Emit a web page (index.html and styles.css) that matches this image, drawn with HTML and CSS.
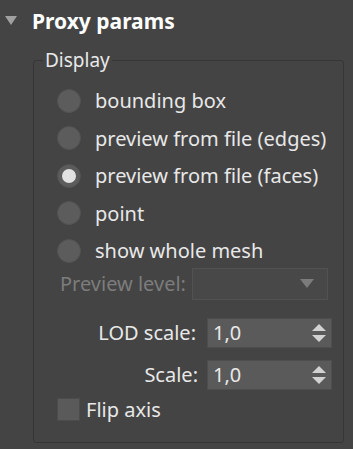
FILE: index.html
```html
<!DOCTYPE html>
<html lang="en">
<head>
  <meta charset="UTF-8">
  <meta name="viewport" content="width=device-width, initial-scale=1">
  <title>Proxy params</title>
  <link rel="stylesheet" href="styles.css">
</head>
<body>
  <div class="rollout-head">
    <span class="caret"></span>
    <span class="rollout-title">Proxy params</span>
  </div>
  <fieldset class="group">
    <legend>Display</legend>
    <div class="radio-row"><span class="radio"></span><span>bounding box</span></div>
    <div class="radio-row"><span class="radio"></span><span class="clip">preview from file (edges)</span></div>
    <div class="radio-row"><span class="radio checked"></span><span>preview from file (faces)</span></div>
    <div class="radio-row"><span class="radio"></span><span>point</span></div>
    <div class="radio-row"><span class="radio"></span><span>show whole mesh</span></div>

    <div class="field-row disabled">
      <span class="level-label">Preview level:</span>
      <div class="dropdown"><span class="drop-arrow"></span></div>
    </div>
    <div class="field-row spin-row">
      <span class="field-label">LOD scale:</span>
      <div class="spinner"><span>1,0</span><span class="spin-arrows"><i class="up"></i><i class="down"></i></span></div>
    </div>
    <div class="field-row spin-row second">
      <span class="field-label">Scale:</span>
      <div class="spinner"><span>1,0</span><span class="spin-arrows"><i class="up"></i><i class="down"></i></span></div>
    </div>
    <div class="check-row"><span class="checkbox"></span><span>Flip axis</span></div>
  </fieldset>
</body>
</html>
```

FILE: styles.css
```css
body {
  margin: 0;
  background-color: #444444;
  font-family: "Noto Sans", "Open Sans", sans-serif;
  font-size: 20px;
  color: #e8e8e8;
  overflow: hidden;
}
.rollout-head {
  display: flex;
  align-items: center;
  height: 40px;
  padding-left: 5px;
}
.caret {
  width: 0;
  height: 0;
  border-left: 6px solid transparent;
  border-right: 6px solid transparent;
  border-top: 9px solid #a0a0a0;
  margin-right: 15px;
  margin-top: 0;
}
.rollout-title {
  font-weight: bold;
  font-size: 21px;
  color: #ffffff;
  margin-top: 2px;
}
.group {
  margin: 8px 0 0 33px;
  width: 311px;
  height: 395px;
  padding: 10px 0 0 23px;
  border: 1px solid #363636;
  border-radius: 3px;
  box-sizing: border-box;
}
.group legend {
  padding: 0 2px;
  margin-left: -14px;
  line-height: 24px;
  font-size: 19px;
}
.radio-row {
  display: flex;
  align-items: center;
  height: 37.5px;
  white-space: nowrap;
}
.radio {
  width: 24px;
  height: 24px;
  box-sizing: border-box;
  border-radius: 50%;
  background-color: #5c5c5c;
  border: 1px solid #525252;
  margin-right: 14px;
  display: flex;
  align-items: center;
  justify-content: center;
  flex-shrink: 0;
}
.radio.checked::after {
  content: "";
  width: 14px;
  height: 14px;
  border-radius: 50%;
  background-color: #e2e2e2;
}
.clip {
  max-width: 231px;
  overflow: hidden;
}
.field-row {
  display: flex;
  align-items: center;
  height: 32px;
  margin-top: -2px;
}
.disabled .level-label {
  color: #7c7c7c;
  margin-left: 3px;
  width: 132px;
  white-space: nowrap;
  overflow: hidden;
}
.dropdown {
  width: 136px;
  height: 32px;
  box-sizing: border-box;
  background-color: #484848;
  border: 1px solid #525252;
  display: flex;
  align-items: center;
  justify-content: flex-end;
  padding-right: 13px;
}
.drop-arrow {
  width: 0;
  height: 0;
  border-left: 7px solid transparent;
  border-right: 7px solid transparent;
  border-top: 9px solid #7b7b7b;
}
.spin-row {
  margin-top: 18px;
  height: 30px;
}
.spin-row.second {
  margin-top: 12px;
}
.field-label {
  width: 150px;
  text-align: right;
  padding-right: 11px;
  box-sizing: border-box;
}
.spin-row.second .field-label {
  padding-right: 9px;
}
.spinner {
  width: 125px;
  height: 30px;
  box-sizing: border-box;
  background-color: #5a5a5a;
  border: 1px solid #4e4e4e;
  display: flex;
  align-items: center;
  justify-content: space-between;
  padding: 0 5px 0 5px;
}
.spin-arrows {
  display: flex;
  flex-direction: column;
  gap: 4px;
}
.spin-arrows i {
  width: 0;
  height: 0;
  border-left: 7px solid transparent;
  border-right: 7px solid transparent;
}
.spin-arrows .up {
  border-bottom: 7px solid #d2d2d2;
}
.spin-arrows .down {
  border-top: 7px solid #d2d2d2;
}
.check-row {
  display: flex;
  align-items: center;
  margin-top: 8px;
  height: 23px;
}
.checkbox {
  width: 23px;
  height: 23px;
  box-sizing: border-box;
  background-color: #5a5a5a;
  border: 1px solid #4c4c4c;
  margin-right: 6px;
}
```
